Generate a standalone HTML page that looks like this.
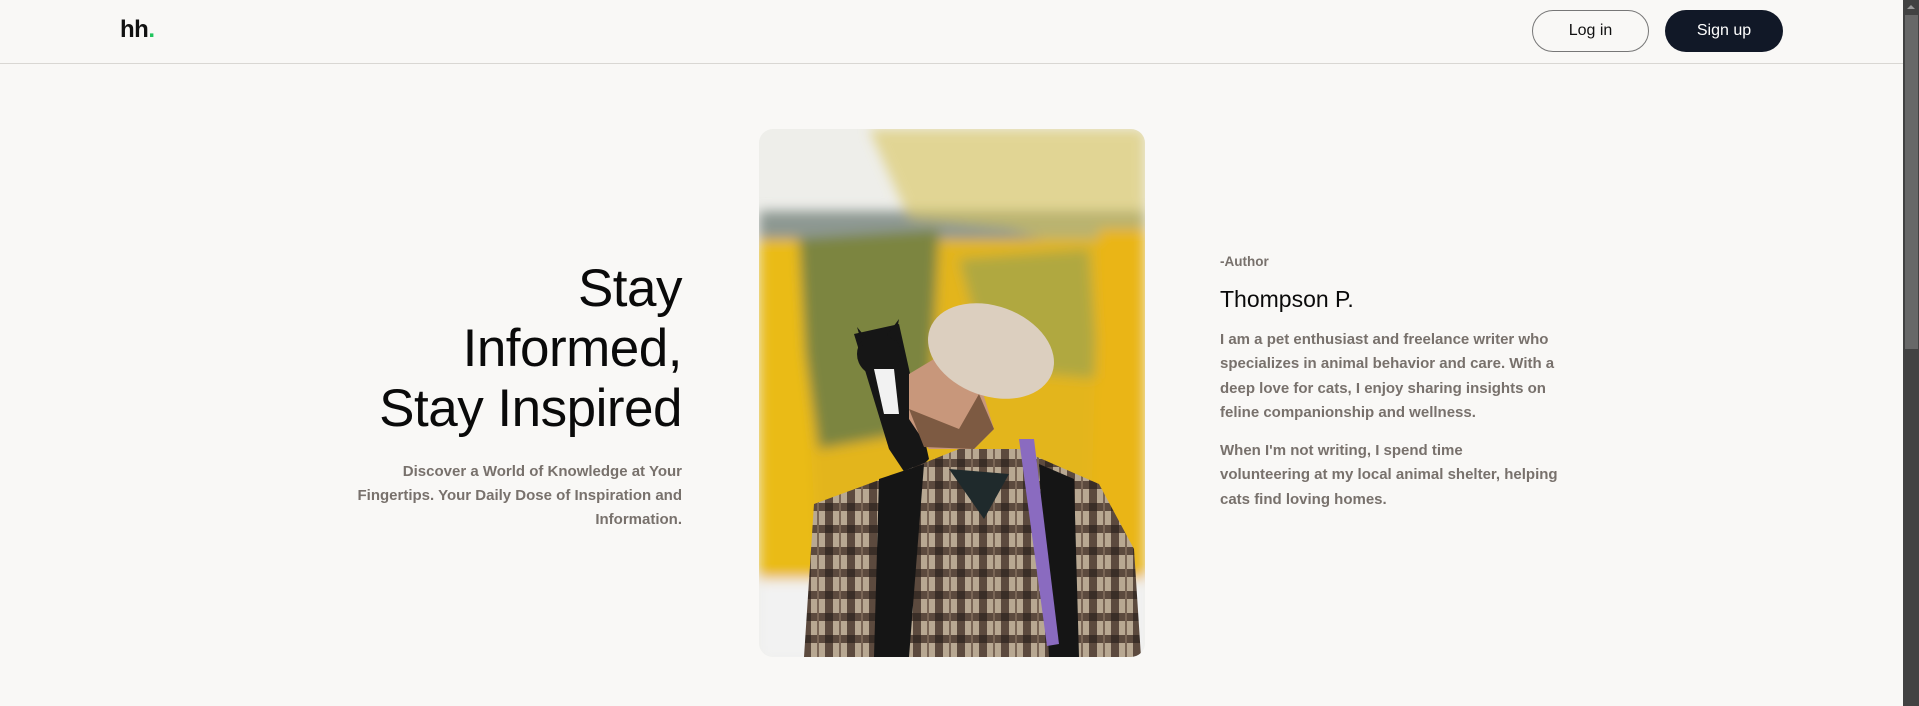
<!DOCTYPE html>
<html><head><meta charset="utf-8"><style>
*{margin:0;padding:0;box-sizing:border-box}
html,body{width:1919px;height:706px;overflow:hidden;background:#f9f8f6;font-family:"Segoe UI","Liberation Sans",sans-serif}
.hdr{position:absolute;left:0;top:0;width:1903px;height:64px;border-bottom:1.5px solid #d9d7d3}
.logo{position:absolute;left:120px;top:16px;font-size:24px;font-weight:600;color:#111;letter-spacing:-0.5px}
.logo span{color:#22c55e}
.btn{position:absolute;top:10px;height:42px;border-radius:21px;font-size:16px;display:flex;align-items:center;justify-content:center}
.login{left:1532px;width:117px;border:1px solid #777;color:#111}
.signup{left:1665px;width:118px;background:#111827;color:#fff}
.sb{position:absolute;left:1903px;top:0;width:16px;height:706px;background:#424242}
.sb .th{position:absolute;left:2px;top:15px;width:13px;height:334px;background:#686868}
.sb .ar{position:absolute;left:4px;top:5px;width:0;height:0;border-left:4px solid transparent;border-right:4px solid transparent;border-bottom:4px solid #9a9a9a}
h1{position:absolute;right:1237px;top:259px;text-align:right;font-size:53px;line-height:60px;font-weight:400;color:#0a0a0a;white-space:nowrap;letter-spacing:-0.5px}
.sub{position:absolute;right:1237px;top:460px;width:340px;text-align:right;font-size:15px;line-height:24px;font-weight:600;color:#78716c}
.rc{position:absolute;left:1220px;top:252px;width:350px;color:#78716c}
.au{font-size:13.5px;font-weight:600;line-height:20px}
.nm{font-size:23px;color:#0a0a0a;margin-top:12px;line-height:30px}
.p{font-size:15px;line-height:24.3px;font-weight:600;margin-top:14px}
.p2{width:346px}
.pic{position:absolute;left:759px;top:129px;width:386px;height:528px;border-radius:14px;overflow:hidden}
</style></head><body>
<div class="hdr"><div class="logo">hh<span>.</span></div>
<div class="btn login">Log in</div><div class="btn signup">Sign up</div></div>
<div class="sb"><div class="ar"></div><div class="th"></div></div>
<h1>Stay<br>Informed,<br>Stay Inspired</h1>
<div class="sub">Discover a World of Knowledge at Your Fingertips. Your Daily Dose of Inspiration and Information.</div>
<div class="pic"><svg width="386" height="528" viewBox="0 0 386 528">
<defs><pattern id="pl" width="22" height="22" patternUnits="userSpaceOnUse">
<rect width="22" height="22" fill="#b8a892"/><rect width="22" height="8" fill="#5c4a3e"/><rect width="8" height="22" fill="#5c4a3e"/><rect width="8" height="8" fill="#3a2e27"/><rect x="14" width="2" height="22" fill="#7a6656"/></pattern>
<filter id="bl"><feGaussianBlur stdDeviation="6"/></filter></defs>
<rect width="386" height="528" fill="#eeeeea"/>
<g filter="url(#bl)">
<rect y="82" width="386" height="70" fill="#8d9892"/>
<path d="M110 0 L386 0 L386 140 L250 100 L150 90Z" fill="#d8c45a" opacity=".6"/>
<rect x="0" y="110" width="386" height="360" fill="#e3b51a"/>
<path d="M30 110 L180 100 L170 300 L60 320Z" fill="#7c8540"/>
<path d="M200 130 L330 120 L340 250 L230 240Z" fill="#b0a840"/>
<path d="M0 110 L40 110 L60 470 L0 470Z" fill="#eabb12"/>
<path d="M340 100 L386 100 L386 470 L330 470Z" fill="#eab515"/>
<rect x="0" y="450" width="386" height="80" fill="#f2f2f2"/>
</g>
<path d="M95 205 L140 195 L170 330 L150 350 L130 320Z" fill="#161616"/>
<ellipse cx="120" cy="225" rx="22" ry="22" fill="#161616"/>
<path d="M98 198 L108 210 L104 218Z M140 190 L136 212 L128 206Z" fill="#161616"/>
<path d="M115 240 L135 240 L140 285 L125 285Z" fill="#f2f2f2"/>
<path d="M45 528 L55 375 L150 340 L200 320 L260 320 L340 355 L375 420 L382 528Z" fill="url(#pl)"/>
<path d="M120 350 L165 335 L150 528 L115 528Z" fill="#151515"/>
<path d="M280 335 L315 350 L320 528 L290 528Z" fill="#151515"/>
<path d="M190 340 L250 345 L225 390Z" fill="#1f2a2c"/>
<path d="M260 310 L275 310 L300 515 L288 517Z" fill="#8a6bc0"/>
<path d="M150 245 L175 230 L215 235 L235 300 L215 320 L170 320 L150 290Z" fill="#c8977b"/>
<path d="M150 280 L200 300 L220 265 L235 300 L215 320 L165 318Z" fill="#7d5a42"/>
<ellipse cx="232" cy="222" rx="65" ry="45" transform="rotate(20 232 222)" fill="#dccfbf"/>
</svg></div>
<div class="rc"><div class="au">-Author</div><div class="nm">Thompson P.</div>
<div class="p">I am a pet enthusiast and freelance writer who specializes in animal behavior and care. With a deep love for cats, I enjoy sharing insights on feline companionship and wellness.</div>
<div class="p p2">When I'm not writing, I spend time<br>volunteering at my local animal shelter, helping cats find loving homes.</div></div>
</body></html>
